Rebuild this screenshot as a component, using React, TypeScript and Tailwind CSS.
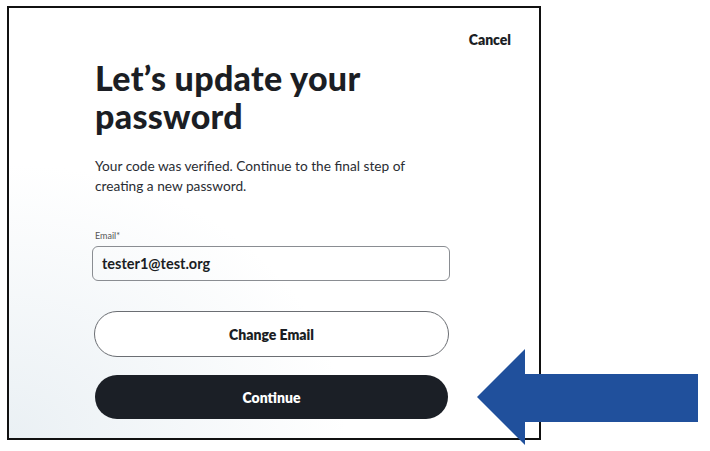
import React from "react";

function Arrow() {
  return (
    <svg
      className="absolute left-[477px] top-[349px]"
      width="222"
      height="97"
      viewBox="0 0 222 97"
    >
      <polygon points="0,48 48,0 48,25 221,25 221,73 48,73 48,96" fill="#20509c" />
    </svg>
  );
}

export default function App() {
  return (
    <div className="relative w-[710px] h-[451px] bg-white overflow-hidden font-['Lato',sans-serif] text-[#1b1e24]">
      {/* Screenshot frame */}
      <div className="ml-[7px] mt-[6px] w-[534px] h-[434px] border-2 border-[#111] bg-[radial-gradient(ellipse_at_bottom_left,#eaf0f4_0%,#ffffff_45%)] flex flex-col">
        <div className="flex justify-end pt-[22px] pr-[28px]">
          <button className="text-[14px] font-extrabold leading-[20px]">Cancel</button>
        </div>

        <div className="pl-[86px] pr-[90px] flex flex-col">
          <h1 className="mt-[9px] text-[34px] font-black leading-[38px] tracking-[0.3px]">
            Let’s update your
            <br />
            password
          </h1>
          <p className="mt-[21px] text-[13.7px] leading-[20px] text-[#2a2d33]">
            Your code was verified. Continue to the final step of
            <br />
            creating a new password.
          </p>

          <label className="mt-[34px] text-[9px] leading-[12px] text-[#555]">
            Email*
          </label>
          <div className="mt-[4px] -ml-[3px] w-[358px] h-[35px] rounded-[6px] border border-[#8a8d92] flex items-center pl-[9px] text-[14.5px] font-bold text-[#1b1e24]">
            tester1@test.org
          </div>

          <button className="mt-[30px] -ml-[1px] w-[355px] h-[46px] rounded-full border border-[#6b6e73] bg-white text-[14px] font-extrabold">
            Change Email
          </button>
          <button className="mt-[18px] w-[353px] h-[44px] rounded-full bg-[#1b1f26] text-white text-[14px] font-extrabold">
            Continue
          </button>
        </div>
      </div>
      <Arrow />
    </div>
  );
}
